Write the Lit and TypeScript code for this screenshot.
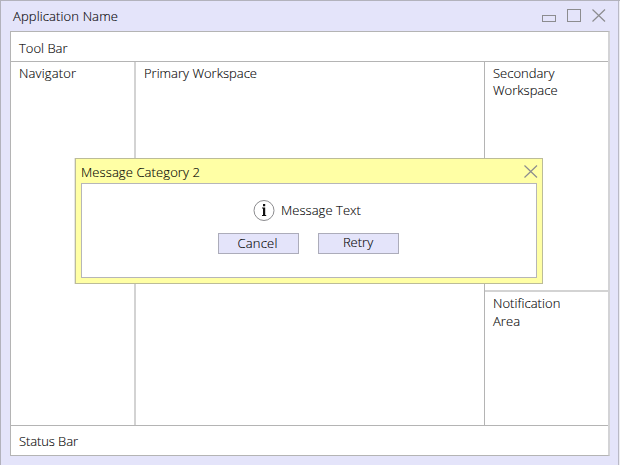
import { LitElement, html, svg, css } from "lit";
import { customElement, property } from "lit/decorators.js";

@customElement("ui-icon")
class UiIcon extends LitElement {
  @property() name = "close";
  static styles = css`
    :host { display: block; line-height: 0; }
    svg { display: block; fill: none; stroke: #8c8c8f; stroke-width: 1; }
    .cross { stroke-width: 1.2; }
    .dot { fill: #111; stroke: none; }
  `;
  render() {
    if (this.name === "info") {
      return html`<svg width="22" height="22" viewBox="0 0 22 22">
        <circle cx="11" cy="10.5" r="10" />
        <path class="dot" d="M10 4h2.200v2.200h-2.200zM9 7.500H12.200v7.500h1v1H9v-1h1V8.500H9z" />
      </svg>`;
    }
    const shapes: Record<string, unknown> = {
      min: svg`<rect x="0.500" y="6.500" width="13" height="6" />`,
      max: svg`<rect x="0.500" y="0.500" width="13" height="12" />`,
      close: svg`<path class="cross" d="M0.500 0.500L13 12.500M13 0.500L0.500 12.500" />`,
    };
    return html`<svg width="14" height="13" viewBox="0 0 14 13">${shapes[this.name]}</svg>`;
  }
}

@customElement("message-dialog")
class MessageDialog extends LitElement {
  static styles = css`
    :host {
      display: flex; flex-direction: column; box-sizing: border-box;
      width: 468px; height: 126px; padding: 0 5px 5px;
      background: #ffffa5; border: 1px solid #bcbc98;
      box-shadow: -1px 0 #e6e6e6;
    }
    .title { display: flex; justify-content: space-between; height: 24px; line-height: 27px; }
    .title ui-icon { margin: 6px -1px 0 0; }
    .name { letter-spacing: 0.1px; }
    .body {
      flex: 1; box-sizing: border-box; border: 1px solid #b6b6b8; background: #fff;
      display: flex; flex-direction: column;
    }
    .message { display: flex; gap: 6px; margin: 16px 0 0 171px; height: 22px; line-height: 21px; }
    .text { letter-spacing: 0.05px; }
    .buttons { display: flex; gap: 19px; margin: 11px 0 0 136px; }
    button {
      font: inherit; color: inherit; box-sizing: border-box; width: 81px; height: 21px; padding: 0;
      border: 1px solid #acacba; background: #e4e4fa; line-height: 19px; text-align: center;
    }
    .cancel { letter-spacing: 0.2px; padding-right: 2px; }
    .retry { line-height: 17px; padding: 0 1px 2px 0; }
  `;
  render() {
    return html`
      <div class="title"><span class="name">Message Category 2</span><ui-icon name="close"></ui-icon></div>
      <div class="body">
        <div class="message"><ui-icon name="info"></ui-icon><span class="text">Message Text</span></div>
        <div class="buttons"><button class="cancel">Cancel</button><button class="retry">Retry</button></div>
      </div>`;
  }
}

@customElement("app-root")
class AppRoot extends LitElement {
  static styles = css`
    :host {
      display: flex; flex-direction: column; position: relative; box-sizing: border-box;
      width: 620px; height: 465px; overflow: hidden; background: #e4e4fa;
      border: solid #b2b2bc; border-width: 1px 0 0 1px;
      box-shadow: inset -1px 0 #ececf2, inset -2px 0 #b9b9c6;
      font: 300 13px/17px "Open Sans", "Noto Sans", sans-serif; color: #000;
      -webkit-text-stroke: 0.1px #000;
    }
    .caption { display: flex; align-items: flex-start; height: 30px; padding: 0 14px 0 12px; line-height: 31px; }
    .caption .name { flex: 1; letter-spacing: 0.12px; }
    .controls { display: flex; gap: 11px; padding-top: 8px; }
    .frame {
      margin: 0 10px 0 9px; height: 425px; box-sizing: border-box; background: #fff;
      border: 1px solid #b4b4b4; border-right: 2px solid #d3d3d6;
      display: flex; flex-direction: column;
    }
    .toolbar { height: 29px; border-bottom: 1px solid #b4b4b4; padding-left: 8px; line-height: 33px; }
    .status { height: 29px; border-top: 1px solid #b4b4b4; padding-left: 8px; line-height: 31px; letter-spacing: -0.1px; }
    .main { flex: 1; display: grid; grid-template-columns: 125px 349px 1fr; }
    .nav, .primary { padding: 3px 8px; }
    .nav { border-right: 2px solid #d3d3d3; letter-spacing: 0.15px; }
    .primary { border-right: 1px solid #b4b4b4; }
    .side { display: flex; flex-direction: column; }
    .secondary { height: 225px; padding: 3px 8px 0; line-height: 17px; }
    .notice { flex: 1; border-top: 2px solid #d3d3d3; padding: 2px 8px 0; line-height: 18px; letter-spacing: 0.05px; }
    message-dialog { position: absolute; left: 74px; top: 157px; }
  `;
  render() {
    return html`
      <div class="caption">
        <span class="name">Application Name</span>
        <div class="controls">
          <ui-icon name="min"></ui-icon><ui-icon name="max"></ui-icon><ui-icon name="close"></ui-icon>
        </div>
      </div>
      <div class="frame">
        <div class="toolbar">Tool Bar</div>
        <div class="main">
          <div class="nav">Navigator</div>
          <div class="primary">Primary Workspace</div>
          <div class="side">
            <div class="secondary">Secondary<br />Workspace</div>
            <div class="notice">Notification<br />Area</div>
          </div>
        </div>
        <div class="status">Status Bar</div>
      </div>
      <message-dialog></message-dialog>`;
  }
}
